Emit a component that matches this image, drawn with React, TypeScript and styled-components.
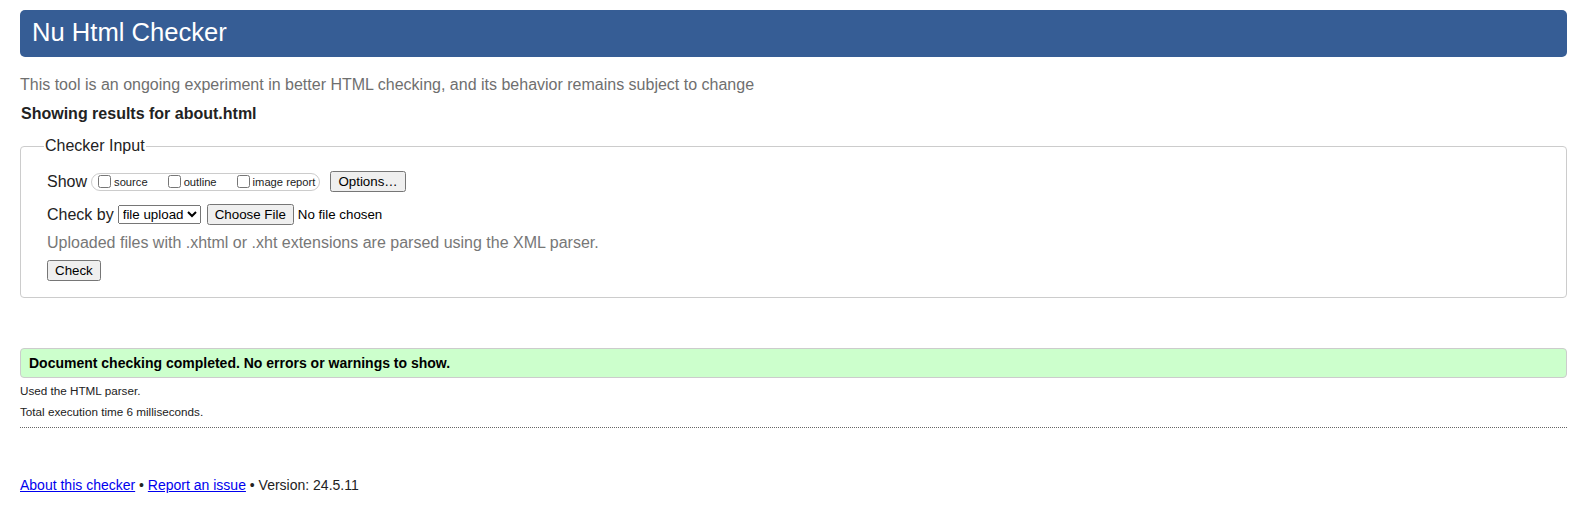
import React from "react";
import styled, { createGlobalStyle } from "styled-components";

const Global = createGlobalStyle`
  html, body { margin: 0; padding: 0; background: #fff; }
  body {
    font-family: "Liberation Sans", Arial, sans-serif;
    font-size: 16px;
    color: #222;
  }
`;

const Page = styled.div`
  padding: 10px 17px 20px 20px;
`;

const Header = styled.h1`
  margin: 0;
  background: #365d95;
  color: #fff;
  border-radius: 5px;
  padding: 7px 12px 9px;
  font-size: 25.6px;
  line-height: 31px;
  font-weight: normal;
`;

const Intro = styled.p`
  margin: 19px 0 0;
  color: #6f6f6f;
  line-height: 18px;
`;

const Showing = styled.p`
  margin: 11px 0 0 1px;
  font-weight: bold;
  line-height: 18px;
`;

const Fieldset = styled.fieldset`
  margin: 14px 0 0;
  border: 1px solid #ccc;
  border-radius: 4px;
  padding: 16px 26px 16px 26px;
  min-width: 0;
`;

const Legend = styled.legend`
  padding: 0 1px;
  margin-left: -3px;
  line-height: 18px;
`;

const Row = styled.div<{ $top?: number }>`
  display: flex;
  align-items: center;
  margin-top: ${(p) => p.$top ?? 0}px;
  min-height: 20px;
`;

const Label = styled.span<{ $gap: number }>`
  margin-right: ${(p) => p.$gap}px;
`;

const Group = styled.span`
  display: inline-flex;
  align-items: center;
  height: 16px;
  border: 1px solid #ccc;
  border-radius: 9px;
  padding: 0 4px 0 2px;
  margin-right: 10px;
`;

const Opt = styled.label<{ $last?: boolean }>`
  display: inline-flex;
  align-items: center;
  font-size: 11.2px;
  margin-right: ${(p) => (p.$last ? 0 : 16)}px;

  input {
    margin: 0 3px 0 4px;
    width: 13px;
    height: 13px;
  }
`;

const Button = styled.button`
  font-family: "Liberation Sans", Arial, sans-serif;
  font-size: 13.333px;
`;

const Select = styled.select`
  font-family: "Liberation Sans", Arial, sans-serif;
  font-size: 13.333px;
  margin-right: 6px;
`;

const FileInput = styled.input`
  font-family: "Liberation Sans", Arial, sans-serif;
  font-size: 13.333px;
  color: #000;
`;

const Hint = styled.p`
  margin: 9px 0 0;
  color: #777;
  line-height: 18px;
`;

const Success = styled.p`
  margin: 50px 0 0;
  background: #ccffcc;
  border: 1px solid #ccc;
  border-radius: 4px;
  padding: 6px 8px 6px;
  font-size: 14px;
  line-height: 16px;
  font-weight: bold;
  color: #000;
`;

const Detail = styled.p<{ $top: number }>`
  margin: ${(p) => p.$top}px 0 0;
  font-size: 11.7px;
  line-height: 14px;
`;

const Rule = styled.hr`
  margin: 8px 0 0;
  border: 0;
  border-top: 1px dotted #666;
  height: 0;
`;

const Footer = styled.p`
  margin: 49px 0 0;
  font-size: 14px;
  line-height: 16px;
  a { color: #0000ee; }
`;

export default function App() {
  return (
    <>
      <Global />
      <Page>
        <Header>Nu Html Checker</Header>
        <Intro>
          This tool is an ongoing experiment in better HTML checking, and its behavior remains subject to change
        </Intro>
        <Showing>Showing results for about.html</Showing>
        <Fieldset>
          <Legend>Checker Input</Legend>
          <Row>
            <Label $gap={4}>Show</Label>
            <Group>
              <Opt>
                <input type="checkbox" />
                source
              </Opt>
              <Opt>
                <input type="checkbox" />
                outline
              </Opt>
              <Opt $last>
                <input type="checkbox" />
                image report
              </Opt>
            </Group>
            <Button type="button">Options…</Button>
          </Row>
          <Row $top={12}>
            <Label $gap={4}>Check by</Label>
            <Select defaultValue="upload">
              <option value="address">address</option>
              <option value="upload">file upload</option>
              <option value="input">text input</option>
            </Select>
            <FileInput type="file" />
          </Row>
          <Hint>Uploaded files with .xhtml or .xht extensions are parsed using the XML parser.</Hint>
          <Row $top={8}>
            <Button type="button">Check</Button>
          </Row>
        </Fieldset>
        <Success>Document checking completed. No errors or warnings to show.</Success>
        <Detail $top={6}>Used the HTML parser.</Detail>
        <Detail $top={7}>Total execution time 6 milliseconds.</Detail>
        <Rule />
        <Footer>
          <a href="#about">About this checker</a> • <a href="#issue">Report an issue</a> • Version: 24.5.11
        </Footer>
      </Page>
    </>
  );
}
